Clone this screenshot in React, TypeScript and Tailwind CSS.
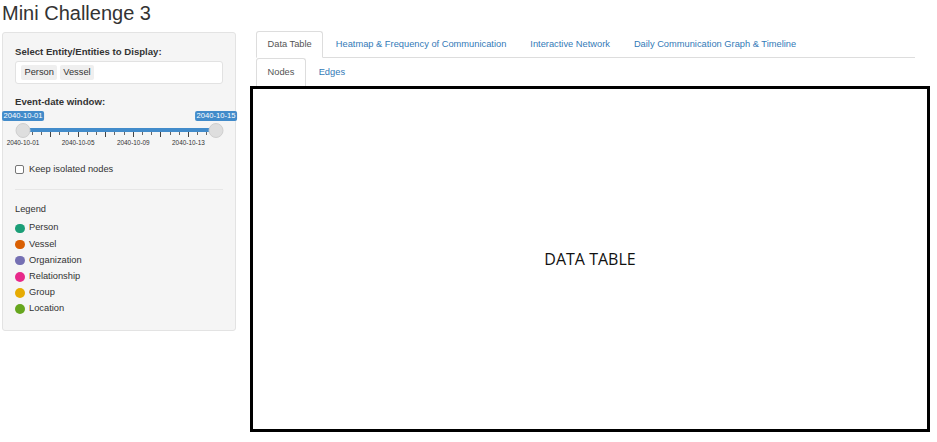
import React from 'react';

const legend = [
  { label: 'Person', color: 'bg-[#1b9e77]' },
  { label: 'Vessel', color: 'bg-[#d95f02]' },
  { label: 'Organization', color: 'bg-[#7570b3]' },
  { label: 'Relationship', color: 'bg-[#e7298a]' },
  { label: 'Group', color: 'bg-[#e6ab02]' },
  { label: 'Location', color: 'bg-[#66a61e]' },
];

const mainTabs = [
  'Data Table',
  'Heatmap & Frequency of Communication',
  'Interactive Network',
  'Daily Communication Graph & Timeline',
];

// slider geometry, relative to the sidebar content box
const START = 7.5;
const END = 200.5;
const SPAN = END - START;

function DateSlider() {
  const big = Array.from({ length: 8 }, (_, k) => START + (k * SPAN) / 7);
  const small = Array.from({ length: 21 }, (_, j) => j)
    .filter((j) => j % 3 !== 0)
    .map((j) => START + (j * SPAN) / 21);
  const gridLabels = ['2040-10-01', '2040-10-05', '2040-10-09', '2040-10-13'];

  return (
    <div className="relative h-[45px] w-full">
      {/* line + bar */}
      <div className="absolute top-[20px] h-[4px] rounded-sm bg-[#ededed]" style={{ left: START, width: SPAN }} />
      <div className="absolute top-[20px] h-[4px] bg-[#428bca]" style={{ left: START, width: SPAN }} />

      {/* grid */}
      {big.map((x, i) => (
        <span key={`b${i}`} className="absolute top-[24px] h-[5px] w-px bg-[#444]" style={{ left: x }} />
      ))}
      {small.map((x, i) => (
        <span key={`s${i}`} className="absolute top-[24px] h-[3px] w-px bg-[#666]" style={{ left: x }} />
      ))}
      {gridLabels.map((t, i) => (
        <span
          key={t}
          className="absolute top-[31px] -translate-x-1/2 whitespace-nowrap text-[6.4px] leading-[8px] text-[#333]"
          style={{ left: big[i * 2] + 0.5 }}
        >
          {t}
        </span>
      ))}

      {/* handles */}
      <span className="absolute top-[15px] h-[15px] w-[15px] -translate-x-1/2 rounded-full border border-[#cfcfcf] bg-[#dedede]" style={{ left: START + 0.5 }} />
      <span className="absolute top-[15px] h-[15px] w-[15px] -translate-x-1/2 rounded-full border border-[#cfcfcf] bg-[#dedede]" style={{ left: END + 0.5 }} />

      {/* value labels */}
      <span className="absolute top-[3px] -translate-x-1/2 whitespace-nowrap rounded-[2px] bg-[#428bca] px-[1.5px] text-[7.6px] leading-[10px] text-white" style={{ left: START + 0.5 }}>
        2040-10-01
      </span>
      <span className="absolute top-[3px] -translate-x-1/2 whitespace-nowrap rounded-[2px] bg-[#428bca] px-[1.5px] text-[7.6px] leading-[10px] text-white" style={{ left: END + 0.5 }}>
        2040-10-15
      </span>
    </div>
  );
}

function Sidebar() {
  return (
    <div className="w-[234px] shrink-0 rounded-[3px] border border-[#e3e3e3] bg-[#f5f5f5] px-[12px] pb-[13px] pt-[12px] text-[9.3px] text-[#333]">
      <div className="text-[9.6px] font-bold leading-[13px]">Select Entity/Entities to Display:</div>
      <div className="mt-[3px] flex h-[23px] w-[208px] items-center gap-[2.3px] rounded-[3px] border border-[#e2e2e2] bg-white px-[5px]">
        <span className="rounded-[2px] bg-[#efefef] px-[3.5px] leading-[15px]">Person</span>
        <span className="rounded-[2px] bg-[#efefef] px-[3.5px] leading-[15px]">Vessel</span>
      </div>

      <div className="mt-[11.4px] text-[9.6px] font-bold leading-[13px]">Event-date window:</div>
      <DateSlider />

      <label className="mt-[9.5px] flex items-center gap-[5px] leading-[13px]">
        <span className="h-[9px] w-[9px] rounded-[2px] border border-[#767676] bg-white" />
        <span>Keep isolated nodes</span>
      </label>

      <div className="mt-[13.5px] h-px w-[208px] bg-[#e6e6e6]" />

      <div className="mt-[12.8px] leading-[13px]">Legend</div>
      <div className="mt-[4px] flex flex-col">
        {legend.map((l) => (
          <div key={l.label} className="flex h-[16.2px] items-center gap-[4.5px]">
            <span className={`h-[9.5px] w-[9.5px] rounded-full ${l.color}`} />
            <span>{l.label}</span>
          </div>
        ))}
      </div>
    </div>
  );
}

export default function App() {
  return (
    <div className="h-[442px] w-[937px] overflow-hidden bg-white font-['Liberation_Sans',Arial,sans-serif] text-[#333]">
      <h2 className="pl-[2px] pt-[2px] text-[20px] font-normal leading-[22px]">Mini Challenge 3</h2>

      <div className="mt-[8px] flex items-start">
        <div className="ml-[2px]">
          <Sidebar />
        </div>

        <div className="ml-[14px] -mt-[1px] flex flex-col">
          {/* top tab row */}
          <ul className="ml-[6px] flex w-[659px] border-b border-[#ddd] text-[9.3px]">
            {mainTabs.map((t, i) => (
              <li key={t} className="-mb-px mr-[1px]">
                <span
                  className={`block rounded-t-[3px] border px-[10.5px] py-[6px] leading-[13px] ${
                    i === 0 ? 'border-[#ddd] border-b-white bg-white text-[#555]' : 'border-transparent text-[#337ab7]'
                  }`}
                >
                  {t}
                </span>
              </li>
            ))}
          </ul>

          {/* sub tab row */}
          <ul className="ml-[6px] flex text-[9.3px]">
            <li className="mr-[1.3px]">
              <span className="block h-[28px] rounded-t-[3px] border border-b-0 border-[#ddd] bg-white px-[10.5px] py-[7px] leading-[13px] text-[#555]">
                Nodes
              </span>
            </li>
            <li>
              <span className="block h-[28px] border border-transparent px-[10.5px] py-[7px] leading-[13px] text-[#337ab7]">
                Edges
              </span>
            </li>
          </ul>

          <div className="flex h-[346px] w-[680px] items-center justify-center border-[3px] border-black bg-white">
            <span className="font-['Open_Sans',sans-serif] text-[16px] text-[#111]">DATA TABLE</span>
          </div>
        </div>
      </div>
    </div>
  );
}
